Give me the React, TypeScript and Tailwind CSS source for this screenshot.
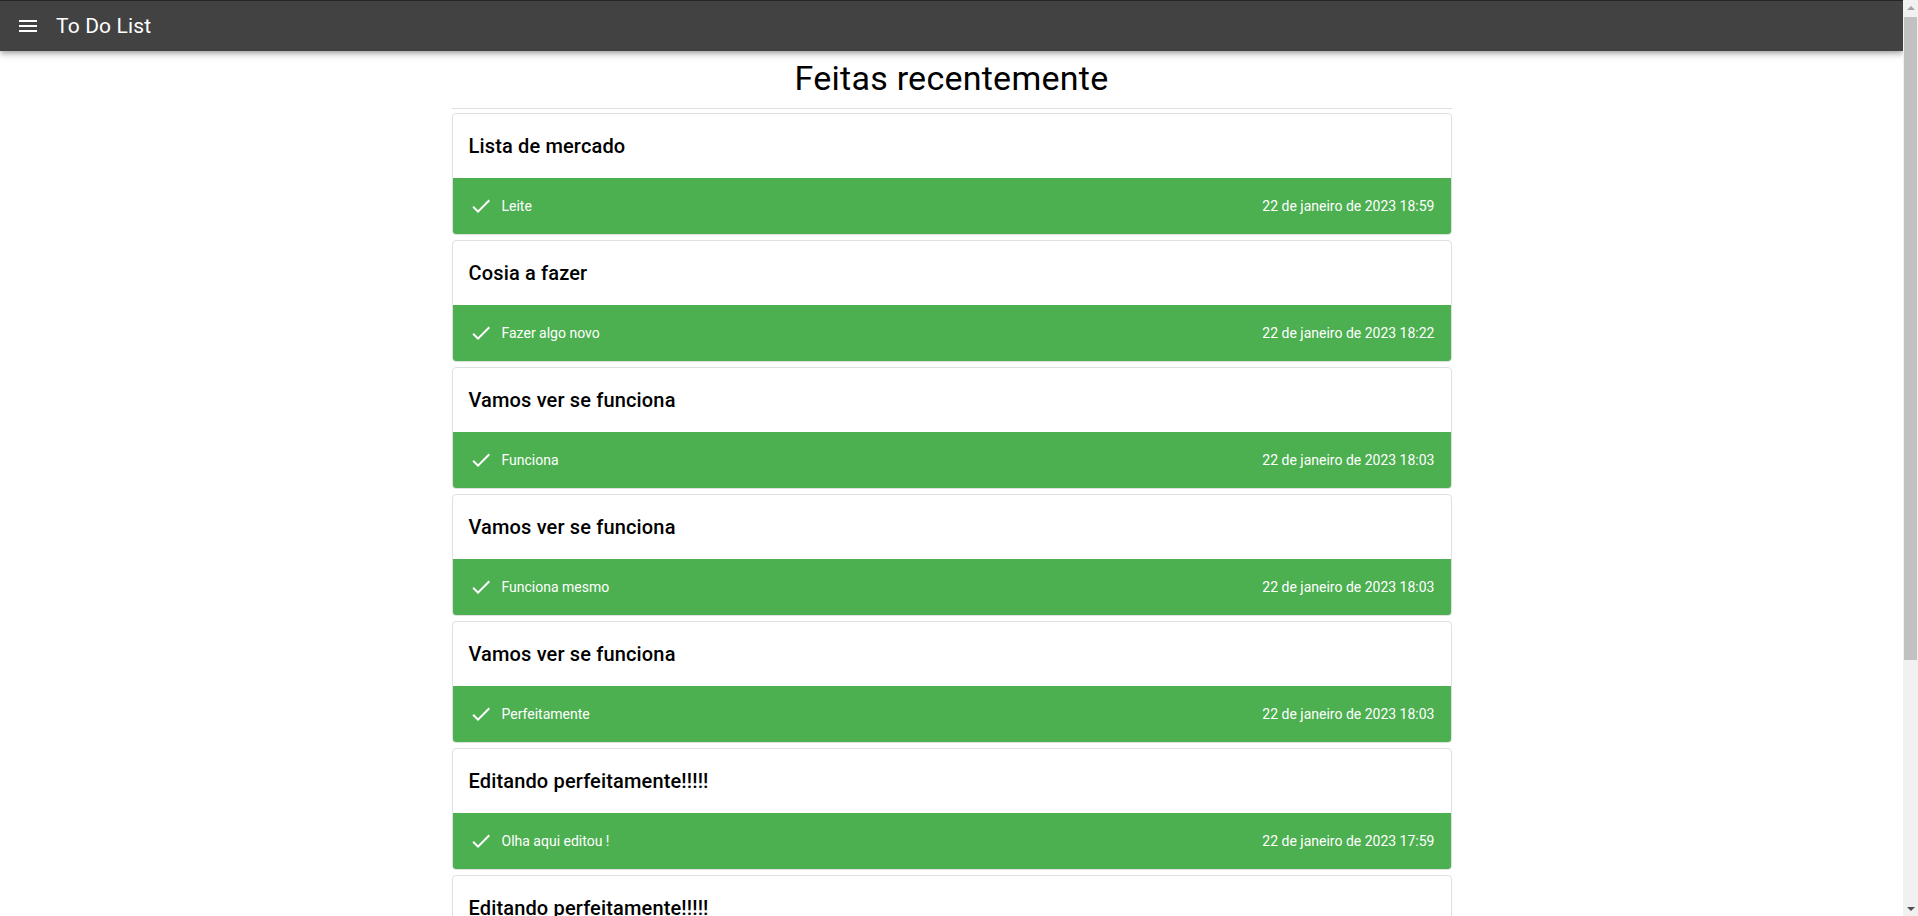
import React from 'react';

interface DoneTask {
  id: number;
  list: string;
  task: string;
  doneAt: string;
}

const tasks: DoneTask[] = [
  { id: 1, list: 'Lista de mercado', task: 'Leite', doneAt: '22 de janeiro de 2023 18:59' },
  { id: 2, list: 'Cosia a fazer', task: 'Fazer algo novo', doneAt: '22 de janeiro de 2023 18:22' },
  { id: 3, list: 'Vamos ver se funciona', task: 'Funciona', doneAt: '22 de janeiro de 2023 18:03' },
  { id: 4, list: 'Vamos ver se funciona', task: 'Funciona mesmo', doneAt: '22 de janeiro de 2023 18:03' },
  { id: 5, list: 'Vamos ver se funciona', task: 'Perfeitamente', doneAt: '22 de janeiro de 2023 18:03' },
  { id: 6, list: 'Editando perfeitamente!!!!!', task: 'Olha aqui editou !', doneAt: '22 de janeiro de 2023 17:59' },
  { id: 7, list: 'Editando perfeitamente!!!!!', task: 'Editar tarefa', doneAt: '22 de janeiro de 2023 17:58' },
  { id: 8, list: 'Lista de mercado', task: 'Pão', doneAt: '22 de janeiro de 2023 17:40' },
  { id: 9, list: 'Lista de mercado', task: 'Café', doneAt: '22 de janeiro de 2023 17:32' },
];

const MenuIcon = () => (
  <svg viewBox="0 0 24 24" className="w-6 h-6 fill-white">
    <path d="M3 18h18v-2H3v2zm0-5h18v-2H3v2zm0-7v2h18V6H3z" />
  </svg>
);

const CheckIcon = () => (
  <svg viewBox="0 0 24 24" className="w-6 h-6 shrink-0 fill-white">
    <path d="M9 16.17 4.83 12l-1.42 1.41L9 19 21 7l-1.41-1.41z" />
  </svg>
);

const TaskCard: React.FC<{ task: DoneTask }> = ({ task }) => (
  <div className="border border-[#e0e0e0] rounded overflow-hidden bg-white">
    {/* List name */}
    <div className="px-4 py-4 h-16 flex items-center">
      <h6 className="text-[20px] leading-8 font-medium text-black tracking-[0.15px]">{task.list}</h6>
    </div>

    {/* Done task */}
    <div className="bg-[#4caf50] h-14 px-4 flex items-center justify-between text-white text-[14px]">
      <div className="flex items-center gap-[9px]">
        <CheckIcon />
        <span>{task.task}</span>
      </div>
      <span>{task.doneAt}</span>
    </div>
  </div>
);

// classic browser scrollbar, page scrolled to the top
const Scrollbar = () => (
  <div className="w-[15px] shrink-0 h-full bg-[#f1f1f1] flex flex-col items-center">
    <div className="h-[15px] w-full flex items-center justify-center">
      <div className="w-0 h-0 border-x-[4px] border-x-transparent border-b-[4px] border-b-[#a3a3a3]" />
    </div>
    <div className="mt-[2px] w-[13px] h-[643px] bg-[#c1c1c1]" />
    <div className="flex-1" />
    <div className="h-[15px] w-full flex items-center justify-center">
      <div className="w-0 h-0 border-x-[4px] border-x-transparent border-t-[4px] border-t-[#505050]" />
    </div>
  </div>
);

export default function App() {
  return (
    <div className="h-screen flex overflow-hidden bg-white font-['Roboto',sans-serif]">
      <div className="flex-1 h-full overflow-y-auto [scrollbar-width:none]">
        {/* App bar */}
        <header className="relative z-10 h-[51px] bg-[#424242] border-t border-[#262626] flex items-center pl-4 gap-4 shadow-[0_2px_4px_-1px_rgba(0,0,0,0.2),0_4px_5px_0_rgba(0,0,0,0.14),0_1px_10px_0_rgba(0,0,0,0.12)]">
          <MenuIcon />
          <span className="text-white text-[21px] leading-none tracking-[0.15px]">To Do List</span>
        </header>

        <main className="w-[1000px] mx-auto pb-1">
          <h4 className="mt-[6px] text-center text-[34px] leading-[42px] text-black tracking-[0.25px]">
            Feitas recentemente
          </h4>
          <hr className="mt-[9px] border-0 border-t border-[#e0e0e0]" />

          <div className="mt-1 flex flex-col gap-[5px]">
            {tasks.map((task) => (
              <TaskCard key={task.id} task={task} />
            ))}
          </div>
        </main>
      </div>
      <Scrollbar />
    </div>
  );
}
